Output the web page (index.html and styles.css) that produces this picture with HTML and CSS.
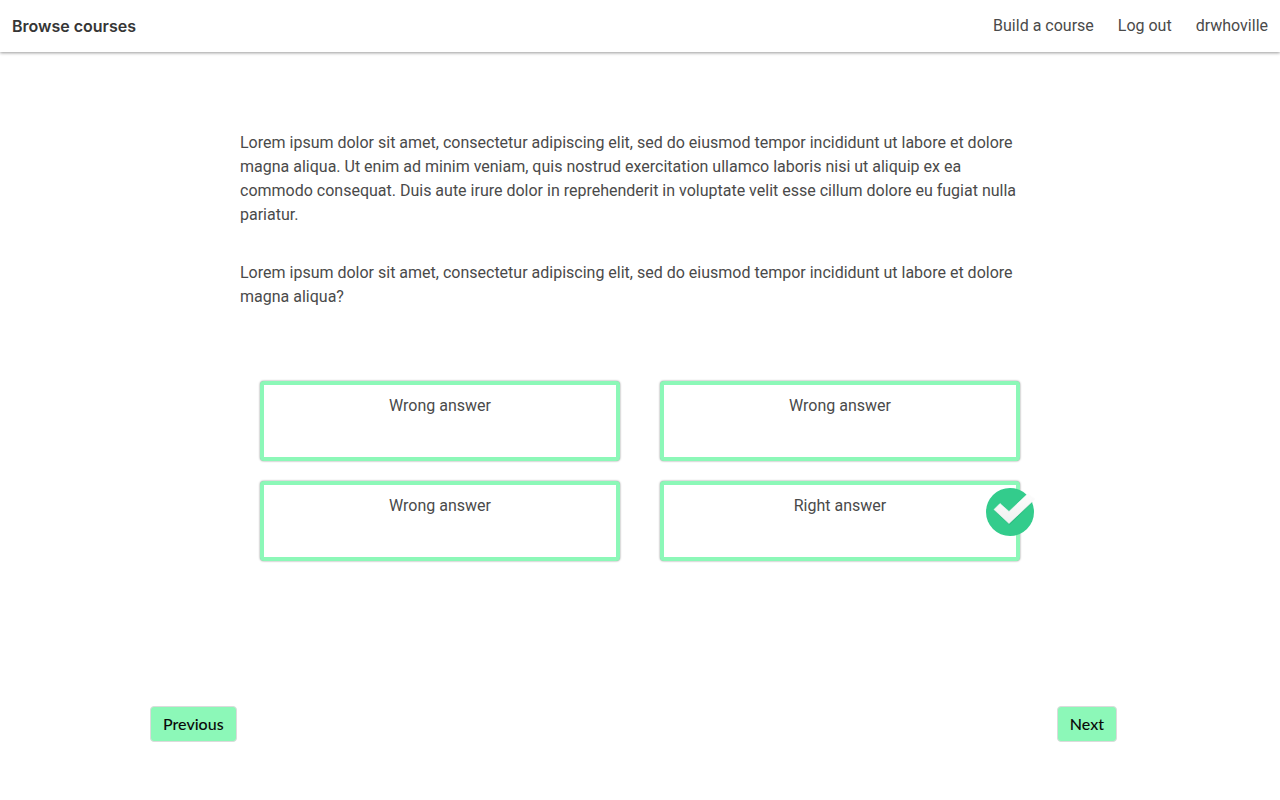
FILE: index.html
```html
<!DOCTYPE html>
<html lang="en">
<head>
<meta charset="utf-8">
<title>Browse courses</title>
<link rel="stylesheet" href="styles.css">
</head>
<body>
<nav class="navbar">
  <a class="brand" href="#">Browse courses</a>
  <div class="nav-links">
    <a href="#">Build a course</a>
    <a href="#">Log out</a>
    <a href="#">drwhoville</a>
  </div>
</nav>
<main class="lesson">
  <p>Lorem ipsum dolor sit amet, consectetur adipiscing elit, sed do eiusmod tempor incididunt ut labore et dolore magna aliqua. Ut enim ad minim veniam, quis nostrud exercitation ullamco laboris nisi ut aliquip ex ea commodo consequat. Duis aute irure dolor in reprehenderit in voluptate velit esse cillum dolore eu fugiat nulla pariatur.</p>
  <p>Lorem ipsum dolor sit amet, consectetur adipiscing elit, sed do eiusmod tempor incididunt ut labore et dolore magna aliqua?</p>
  <div class="answers">
    <button class="answer" type="button">Wrong answer</button>
    <button class="answer" type="button">Wrong answer</button>
    <button class="answer" type="button">Wrong answer</button>
    <button class="answer" type="button">Right answer
      <svg class="check" viewBox="0 0 50 50" aria-hidden="true">
        <defs>
          <linearGradient id="tick" x1="0" y1="0" x2="0" y2="1">
            <stop offset="0" stop-color="#fdfdfd"/>
            <stop offset="1" stop-color="#f0f0f0"/>
          </linearGradient>
        </defs>
        <circle cx="24" cy="24" r="24" fill="#33cc8c"/>
        <path d="M8.500 23 L14 17.5 L23 26 L43 8 L46.500 14.500 L23.500 37 Z" fill="#24a871" opacity=".4"/>
        <path d="M8 21.500 L14 15.500 L23 23.500 L42 5.500 L49 11 L23 35.500 Z" fill="url(#tick)" stroke="url(#tick)" stroke-width=".6" stroke-linejoin="round"/>
      </svg>
    </button>
  </div>
</main>
<footer class="pager">
  <button class="page-button" type="button">Previous</button>
  <button class="page-button" type="button">Next</button>
</footer>
</body>
</html>
```
FILE: styles.css
```css
* {
  box-sizing: border-box;
}

body {
  margin: 0;
  background: #fff;
  color: #4a4a4a;
  font-family: Roboto, "Liberation Sans", sans-serif;
  font-size: 16px;
  line-height: 24px;
}

a {
  color: inherit;
  text-decoration: none;
}

.navbar {
  display: flex;
  align-items: center;
  justify-content: space-between;
  padding: 14px 12px;
  box-shadow: 0 1px 3px rgba(0, 0, 0, 0.4);
}

.brand {
  color: #363636;
  font-family: Inter, sans-serif;
  font-weight: 600;
}

.nav-links {
  display: flex;
  gap: 24px;
}

.lesson {
  max-width: 800px;
  margin: 79px auto 0;
}

.lesson p {
  margin: 0 0 34px;
  padding-right: 20px;
}

.answers {
  display: grid;
  grid-template-columns: 1fr 1fr;
  gap: 20px 40px;
  padding: 0 20px;
  margin-top: 72px;
}

.answer {
  position: relative;
  display: flex;
  align-items: flex-start;
  justify-content: center;
  min-height: 80px;
  padding: 9px 8px;
  border: 4px solid #8cf8b8;
  border-radius: 4px;
  background: #fff;
  box-shadow: 0 0 2px rgba(0, 0, 0, 0.5);
  color: inherit;
  font: inherit;
  cursor: pointer;
}

.check {
  position: absolute;
  top: 3px;
  right: -20px;
  width: 50px;
  height: 50px;
}

.pager {
  display: flex;
  justify-content: space-between;
  max-width: 980px;
  margin: 145px auto 0;
  padding: 0 13px 40px 0;
}

.page-button {
  padding: 5px 12px;
  border: 1px solid #dbdbdb;
  border-radius: 4px;
  background: #8cf8b8;
  color: #0a0a0a;
  font: 500 16px/24px Lato, sans-serif;
  cursor: pointer;
}
```
